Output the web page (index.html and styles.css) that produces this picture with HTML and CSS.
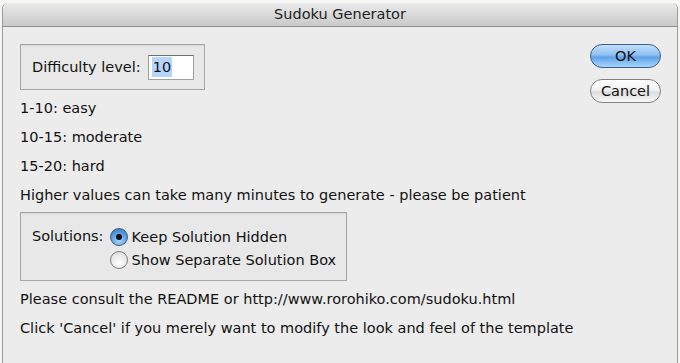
FILE: index.html
```html
<!DOCTYPE html>
<html lang="en">
<head>
  <meta charset="UTF-8" />
  <title>Sudoku Generator</title>
  <link rel="stylesheet" href="styles.css">
</head>
<body>
  <div class="window">
    <div class="titlebar">Sudoku Generator</div>
    <div class="content">
      <div class="main">
        <div class="group difficulty">
          <label for="level">Difficulty level:</label>
          <span class="field"><span class="sel">10</span></span>
        </div>
        <p>1-10: easy</p>
        <p>10-15: moderate</p>
        <p>15-20: hard</p>
        <p>Higher values can take many minutes to generate - please be patient</p>
        <div class="group solutions">
          <span class="sol-label">Solutions:</span>
          <div class="radios">
            <div class="radio-row"><span class="radio on"></span>Keep Solution Hidden</div>
            <div class="radio-row"><span class="radio"></span>Show Separate Solution Box</div>
          </div>
        </div>
        <p>Please consult the README or http://www.rorohiko.com/sudoku.html</p>
        <p>Click 'Cancel' if you merely want to modify the look and feel of the template</p>
      </div>
      <div class="buttons">
        <button class="btn ok">OK</button>
        <button class="btn cancel">Cancel</button>
      </div>
    </div>
  </div>
</body>
</html>
```

FILE: styles.css
```css
html, body {
  height: 100%;
}
body {
  margin: 0;
  background: #f6f6f2;
  font-family: "DejaVu Sans", sans-serif;
  font-size: 14.5px;
  color: #111;
  overflow: hidden;
}
.window {
  margin: 3px 2px 0 2px;
  height: calc(100% - 3px);
  background: #ececec;
  border-left: 1px solid #9a9a9a;
  border-right: 1px solid #9a9a9a;
  border-radius: 6px 6px 0 0;
  box-sizing: border-box;
  overflow: hidden;
}
.titlebar {
  height: 23px;
  line-height: 23px;
  text-align: center;
  font-size: 14.5px;
  color: #222;
  background: linear-gradient(#ebebeb, #c9c9c9);
  border-bottom: 1px solid #8d8d8d;
}
.content {
  display: flex;
  justify-content: space-between;
  padding: 17px 16px 0 17px;
}
.main p {
  margin: 0;
  height: 29px;
  line-height: 29px;
  white-space: nowrap;
}
.group {
  border: 1px solid #a6a6a6;
  background: #e8e8e8;
  box-shadow: inset 0 1px 0 #d6d6d6;
}
.difficulty {
  width: 172px;
  height: 44px;
  display: flex;
  align-items: center;
  padding-left: 11px;
  margin-bottom: 4px;
}
.difficulty label {
  margin-right: 7px;
}
.field {
  width: 46px;
  height: 25px;
  background: #fff;
  border: 1px solid #a0a0a0;
  border-top-color: #6f6f6f;
  display: flex;
  align-items: center;
  padding-left: 3px;
  box-sizing: border-box;
}
.sel {
  background: #b5d5ff;
  padding: 1px 1px;
  line-height: 18px;
}
.solutions {
  width: 327px;
  height: 69px;
  display: flex;
  padding: 12px 0 0 11px;
  box-sizing: border-box;
  margin: 2px 0 4px 0;
}
.sol-label {
  line-height: 23px;
  margin-right: 6px;
}
.radio-row {
  display: flex;
  align-items: center;
  height: 23px;
}
.radio {
  width: 16px;
  height: 16px;
  border-radius: 50%;
  border: 1px solid #7f7f7f;
  background: radial-gradient(circle at 50% 70%, #ffffff, #d8d8d8);
  margin-right: 4px;
  position: relative;
}
.radio.on {
  border-color: #3a5f8f;
  background: radial-gradient(circle at 50% 75%, #a9d6ff 0%, #5b9be0 55%, #2f6fc0 100%);
}
.radio.on::after {
  content: "";
  position: absolute;
  width: 6px;
  height: 6px;
  border-radius: 50%;
  background: #111;
  left: 5px;
  top: 5px;
}
.buttons {
  display: flex;
  flex-direction: column;
  gap: 11px;
}
.btn {
  width: 71px;
  height: 24px;
  border-radius: 12px;
  font-family: "DejaVu Sans", sans-serif;
  font-size: 14.5px;
  color: #111;
  padding: 0;
}
.ok {
  border: 1px solid #3d5e8c;
  background: linear-gradient(#c4e0fb 0%, #8ec0f2 45%, #5fa1e8 55%, #a7d6ff 100%);
}
.cancel {
  border: 1px solid #808080;
  background: linear-gradient(#ffffff 0%, #f1f1f1 45%, #dedede 55%, #f7f7f7 100%);
}
```
